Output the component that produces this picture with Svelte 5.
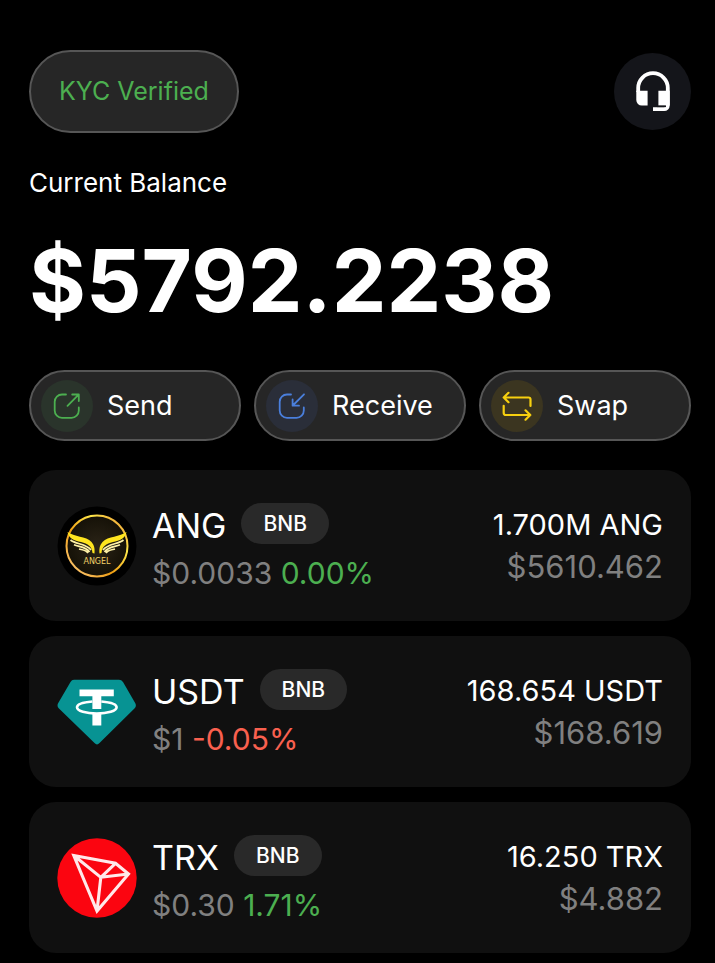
<script>
  const actions = [
    { id: 'send', label: 'Send' },
    { id: 'receive', label: 'Receive' },
    { id: 'swap', label: 'Swap' }
  ];

  const tokens = [
    { symbol: 'ANG', network: 'BNB', price: '$0.0033', change: '0.00%', down: false, amount: '1.700M ANG', value: '$5610.462' },
    { symbol: 'USDT', network: 'BNB', price: '$1', change: '-0.05%', down: true, amount: '168.654 USDT', value: '$168.619' },
    { symbol: 'TRX', network: 'BNB', price: '$0.30', change: '1.71%', down: false, amount: '16.250 TRX', value: '$4.882' }
  ];
</script>

{#snippet wing()}
  <path d="M10.5 26C17 31 29 30 34.5 36C37 39 38 42 37.5 47.5L35.5 47C35 40.5 31 37.5 24 36C17 34.8 12 32.5 10.5 26Z" fill="#ffe51f" />
  <path d="M13.5 34C19 38.5 29 37.5 34 44M17 38.8C22 41 29 40.5 32.5 46M22 43C26 44 29 44 31 47" fill="none" stroke="#fff2a8" stroke-width="1.7" />
{/snippet}

<main class="wallet">
  <header class="top">
    <button class="kyc" type="button">KYC Verified</button>
    <button class="support" type="button" aria-label="Support">
      <svg viewBox="0 1 40 44" width="40" height="44" aria-hidden="true">
        <path d="M5.2 23V19a14.8 14.8 0 0 1 29.6 0V36.5a3.6 3.6 0 0 1-3.6 3.6H20" fill="none" stroke="#fff" stroke-width="3.8" />
        <path d="M3.3 21.8H14.6V36.6H8.8a5.5 5.5 0 0 1-5.5-5.5ZM25.4 21.8H36.7V36.6H25.4Z" fill="#fff" />
        <path d="M24 37.4H33" stroke="#14151a" stroke-width="1.4" />
      </svg>
    </button>
  </header>

  <section class="balance">
    <h2>Current Balance</h2>
    <p>$5792.2238</p>
  </section>

  <nav class="actions" aria-label="Wallet actions">
    {#each actions as action (action.id)}
      <button class="action" type="button">
        <span class="disc {action.id}">
          {#if action.id === 'send'}
            <svg viewBox="0 0 28 28" width="28" height="28" aria-hidden="true">
              <path d="M13 2.5H9A7.3 7.3 0 0 0 1.7 9.8V18.5a7.3 7.3 0 0 0 7.3 7.3H18.5a7.3 7.3 0 0 0 7.3-7.3V15.5M14.5 13.8 25.6 2.7M19.2 2.5H25.8V9" />
            </svg>
          {:else if action.id === 'receive'}
            <svg viewBox="0 0 28 28" width="28" height="28" aria-hidden="true">
              <path d="M13 2.5H9A7.3 7.3 0 0 0 1.7 9.8V18.5a7.3 7.3 0 0 0 7.3 7.3H18.5a7.3 7.3 0 0 0 7.3-7.3V15.5M26 2.3 14.8 13.5M14.6 7.4V13.7H21" />
            </svg>
          {:else}
            <svg class="wide" viewBox="0 0 32 32" width="32" height="32" aria-hidden="true">
              <path d="M7.5 2.8 2.7 7.5 7.5 12.2M2.7 7.5H27.5a2 2 0 0 1 2 2V16M24.5 20.3 29.3 25 24.5 29.7M29.3 25H4.7a2 2 0 0 1-2-2V15.8" />
            </svg>
          {/if}
        </span>
        {action.label}
      </button>
    {/each}
  </nav>

  <ul class="tokens">
    {#each tokens as token (token.symbol)}
      <li class="card">
        {#if token.symbol === 'ANG'}
          <svg class="logo" viewBox="0 0 80 80" role="img" aria-label="Angel logo">
            <defs>
              <linearGradient id="ring" x1="0" y1="1" x2="1" y2="0">
                <stop offset="0" stop-color="#ffd08a" />
                <stop offset=".4" stop-color="#ef9d12" />
                <stop offset=".7" stop-color="#ffe84a" />
                <stop offset="1" stop-color="#e88a32" />
              </linearGradient>
              <radialGradient id="glow">
                <stop offset="0" stop-color="#2b2417" />
                <stop offset="1" stop-color="#151107" />
              </radialGradient>
            </defs>
            <circle cx="40" cy="40" r="39.5" fill="#000" />
            <circle cx="40" cy="40" r="30.5" fill="url(#glow)" stroke="url(#ring)" stroke-width="2" />
            {@render wing()}
            <g transform="translate(80 0) scale(-1 1)">
              {@render wing()}
            </g>
            <text class="mark" x="40" y="58" text-anchor="middle">ANGEL</text>
          </svg>
        {:else if token.symbol === 'USDT'}
          <svg class="logo" viewBox="0 0 80 80" role="img" aria-label="Tether logo">
            <path d="M17 7.8H62Q64.5 7.8 66 10L78.3 31.3Q79.7 34 77.7 36.3L42.5 71Q40 73.8 37.5 71L1.7 36.3Q-.3 34 1.1 31.3L13.5 10Q14.7 7.8 17 7.8Z" fill="#079393" />
            <path d="M22.5 17.5H56.8V24.3H44.3V37H35.4V24.3H22.5ZM35.4 42H44.3V53.5H35.4Z" fill="#fff" />
            <path d="M35.4 29.5C26 30.2 20 32.3 20 35.3C20 39 29 41.6 39.8 41.6S59.6 39 59.6 35.3C59.6 32.3 53.5 30.2 44.3 29.5" fill="none" stroke="#fff" stroke-width="2.6" />
          </svg>
        {:else}
          <svg class="logo" viewBox="0 0 80 80" role="img" aria-label="Tron logo">
            <circle cx="40" cy="40" r="39.7" fill="#fb0510" />
            <path d="M16.8 17.5 58.5 25.3 71.5 36 40 73ZM16.8 17.5 43.8 39.3 40 73M43.8 39.3 58.5 25.3M43.8 39.3 71.5 36" fill="none" stroke="#ffe9ea" stroke-width="3.1" stroke-linejoin="miter" />
          </svg>
        {/if}
        <div class="asset">
          <div class="name">
            <h3>{token.symbol}</h3>
            <span class="network">{token.network}</span>
          </div>
          <p class="price">{token.price} <span class:down={token.down}>{token.change}</span></p>
        </div>
        <div class="holding">
          <p class="amount">{token.amount}</p>
          <p class="value">{token.value}</p>
        </div>
      </li>
    {/each}
  </ul>
</main>

<style>
  :global(body) {
    margin: 0;
    background: #000;
  }

  .wallet {
    box-sizing: border-box;
    min-height: 100vh;
    padding: 50px 24px 10px 29px;
    background: #000;
    color: #fff;
    font-family: Inter, 'Liberation Sans', sans-serif;
  }

  h2, h3, p, ul {
    margin: 0;
    padding: 0;
    font-weight: 400;
  }

  button {
    padding: 0;
    font: inherit;
    color: inherit;
    cursor: pointer;
  }

  .top {
    display: flex;
    align-items: center;
    justify-content: space-between;
  }

  .kyc {
    padding: 24px 28px;
    border: 2px solid #565656;
    border-radius: 42px;
    background: #262626;
    color: #4caf50;
    font-size: 25px;
    line-height: 31px;
  }

  .support {
    display: grid;
    place-items: center;
    width: 77px;
    height: 77px;
    border: 0;
    border-radius: 50%;
    background: #14151a;
  }

  .balance h2 {
    margin-top: 32px;
    font-size: 26px;
    line-height: 36px;
  }

  .balance p {
    margin-top: 28px;
    font-size: 87px;
    line-height: 104px;
    font-weight: 700;
  }

  .actions {
    display: grid;
    grid-template-columns: repeat(3, 1fr);
    gap: 13px;
    margin-top: 37px;
  }

  .action {
    display: flex;
    align-items: center;
    gap: 14px;
    height: 71px;
    padding: 0 10px;
    border: 2px solid #565656;
    border-radius: 36px;
    background: #262626;
    font-size: 27px;
    line-height: 34px;
  }

  .disc {
    display: grid;
    place-items: center;
    width: 52px;
    height: 52px;
    border-radius: 50%;
  }

  .disc svg {
    fill: none;
    stroke: currentColor;
    stroke-width: 1.8;
    stroke-linecap: round;
    stroke-linejoin: round;
  }

  .disc svg.wide {
    stroke-width: 2.2;
  }

  .send {
    background: #2a342b;
    color: #4caf50;
  }

  .receive {
    background: #2a2e39;
    color: #4a7fdc;
  }

  .swap {
    background: #3b3520;
    color: #f7d00f;
  }

  .tokens {
    display: grid;
    gap: 15px;
    margin-top: 29px;
    list-style: none;
  }

  .card {
    display: flex;
    align-items: center;
    gap: 15px;
    height: 151px;
    box-sizing: border-box;
    padding: 0 28px;
    border-radius: 27px;
    background: #101010;
  }

  .logo {
    flex: none;
    width: 80px;
    height: 80px;
  }

  .mark {
    fill: #f0d068;
    font-family: 'DejaVu Sans', sans-serif;
    font-size: 8px;
  }

  .asset {
    flex: 1;
    margin-top: 5px;
  }

  .name {
    display: flex;
    align-items: flex-start;
    gap: 15px;
  }

  h3 {
    font-size: 34px;
    line-height: 46px;
  }

  .network {
    padding: 0 22px;
    border-radius: 21px;
    background: #292929;
    font-size: 21px;
    font-weight: 500;
    line-height: 41px;
  }

  .price {
    margin-top: 4px;
    color: #808080;
    font-size: 30px;
    line-height: 40px;
  }

  .price span {
    color: #4caf50;
  }

  .price .down {
    color: #f9604f;
  }

  .holding {
    text-align: right;
  }

  .amount {
    font-size: 29px;
    line-height: 42px;
  }

  .value {
    color: #808080;
    font-size: 31px;
    line-height: 42px;
  }
</style>
